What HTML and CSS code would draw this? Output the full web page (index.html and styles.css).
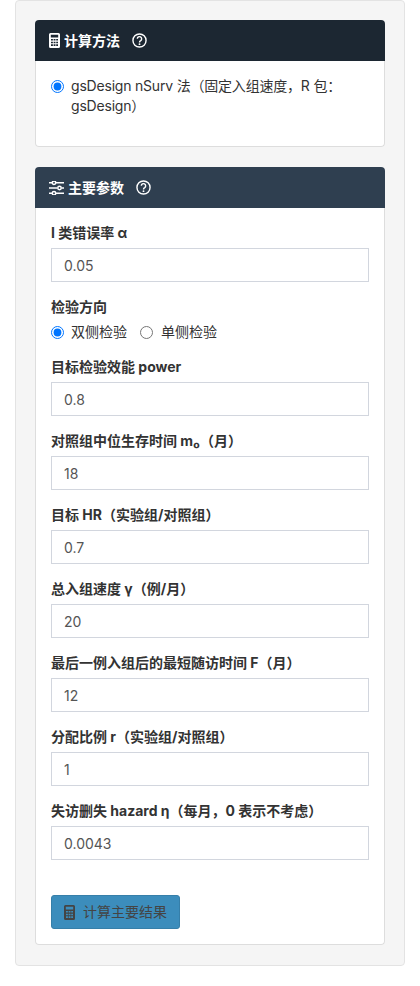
FILE: index.html
```html
<!DOCTYPE html>
<html lang="zh-CN">
<head>
    <meta charset="UTF-8">
    <meta name="viewport" content="width=device-width, initial-scale=1.0">
    <title>计算方法</title>
    <link rel="stylesheet" href="styles.css">
</head>
<body>
    <div class="well">
        <!-- 计算方法 -->
        <div class="box box-dark">
            <div class="box-header">
                <svg class="icon-calc" viewBox="0 0 11 15"><path fill-rule="evenodd" d="M1.500 0h8A1.500 1.500 0 0 1 11 1.500v12A1.500 1.500 0 0 1 9.500 15h-8A1.500 1.500 0 0 1 0 13.500v-12A1.500 1.500 0 0 1 1.500 0zM1.800 1.800v2.700h7.400V1.800zM2 6v1.600h1.900V6zM4.600 6v1.600h1.900V6zM7.200 6v1.600h1.800V6zM2 8.700v1.600h1.900V8.700zM4.600 8.700v1.600h1.900V8.700zM7.200 8.700v1.600h1.800V8.700zM2 11.300v1.800h1.900v-1.800zM4.600 11.300v1.800h1.900v-1.800zM7.200 11.300v1.800h1.800v-1.800z"/></svg>
                <h3>计算方法</h3>
                <svg class="icon-help" viewBox="0 0 16 16"><circle cx="8" cy="8" r="7"/><path d="M5.700 6.200a2.300 2.300 0 1 1 3.600 1.900c-.8.500-1.300 1-1.300 2"/><circle class="dot" cx="8" cy="11.900" r="1"/></svg>
            </div>
            <div class="box-body">
                <label class="radio-line">
                    <input type="radio" name="method" checked>
                    <span>gsDesign nSurv 法（固定入组速度，R 包：gsDesign）</span>
                </label>
            </div>
        </div>

        <!-- 主要参数 -->
        <div class="box box-blue">
            <div class="box-header">
                <svg class="icon-sliders" viewBox="0 0 15 14"><path d="M0 1.800h3M7 1.800h8M0 7h8.500M12.500 7H15M0 12.200h3M7 12.200h8"/><circle cx="5" cy="1.800" r="1.700"/><circle cx="10.500" cy="7" r="1.700"/><circle cx="5" cy="12.200" r="1.700"/></svg>
                <h3>主要参数</h3>
                <svg class="icon-help" viewBox="0 0 16 16"><circle cx="8" cy="8" r="7"/><path d="M5.700 6.200a2.300 2.300 0 1 1 3.600 1.900c-.8.500-1.300 1-1.300 2"/><circle class="dot" cx="8" cy="11.900" r="1"/></svg>
            </div>
            <div class="box-body">
                <div class="form-group">
                    <label>I 类错误率 α</label>
                    <input type="text" value="0.05">
                </div>
                <div class="form-group">
                    <label>检验方向</label>
                    <div class="radio-row">
                        <label><input type="radio" name="side" checked><span>双侧检验</span></label>
                        <label><input type="radio" name="side"><span>单侧检验</span></label>
                    </div>
                </div>
                <div class="form-group">
                    <label>目标检验效能 power</label>
                    <input type="text" value="0.8">
                </div>
                <div class="form-group">
                    <label>对照组中位生存时间 m₀（月）</label>
                    <input type="text" value="18">
                </div>
                <div class="form-group">
                    <label>目标 HR（实验组/对照组）</label>
                    <input type="text" value="0.7">
                </div>
                <div class="form-group">
                    <label>总入组速度 γ（例/月）</label>
                    <input type="text" value="20">
                </div>
                <div class="form-group">
                    <label>最后一例入组后的最短随访时间 F（月）</label>
                    <input type="text" value="12">
                </div>
                <div class="form-group">
                    <label>分配比例 r（实验组/对照组）</label>
                    <input type="text" value="1">
                </div>
                <div class="form-group">
                    <label>失访删失 hazard η（每月，0 表示不考虑）</label>
                    <input type="text" value="0.0043">
                </div>
                <button class="btn" type="button">
                    <svg class="icon-calc" viewBox="0 0 11 15"><path fill-rule="evenodd" d="M1.500 0h8A1.500 1.500 0 0 1 11 1.500v12A1.500 1.500 0 0 1 9.500 15h-8A1.500 1.500 0 0 1 0 13.500v-12A1.500 1.500 0 0 1 1.500 0zM1.800 1.800v2.700h7.400V1.800zM2 6v1.600h1.900V6zM4.600 6v1.600h1.900V6zM7.200 6v1.600h1.800V6zM2 8.700v1.600h1.900V8.700zM4.600 8.700v1.600h1.900V8.700zM7.200 8.700v1.600h1.800V8.700zM2 11.300v1.800h1.900v-1.800zM4.600 11.300v1.800h1.900v-1.800zM7.200 11.300v1.800h1.800v-1.800z"/></svg>
                    计算主要结果
                </button>
            </div>
        </div>
    </div>
</body>
</html>
```

FILE: styles.css
```css
*{
    box-sizing: border-box;
}
body{
    margin: 0;
    padding: 0 15px;
    background: #fff;
    font-family: Inter, "Noto Sans CJK SC", sans-serif;
    font-size: 14px;
    line-height: 20px;
    color: #333;
}
.well{
    height: 966px;
    padding: 19px;
    background: #f5f5f5;
    border: 1px solid #e3e3e3;
    border-radius: 4px;
}
.box{
    background: #fff;
    border-radius: 4px;
    margin-bottom: 20px;
}
.box:last-child{
    margin-bottom: 0;
}
.box-header{
    display: flex;
    align-items: center;
    height: 41px;
    padding: 0 14px;
    color: #fff;
    border-radius: 4px 4px 0 0;
}
.box-dark .box-header{
    background: #1c2732;
}
.box-blue .box-header{
    background: #2f3f50;
}
.box-header h3{
    margin: 0;
    font-size: 14px;
    font-weight: 700;
    line-height: 20px;
}
.box-body{
    padding: 15px;
    background: #fff;
    border: 1px solid #ddd;
    border-top: 0;
    border-radius: 0 0 4px 4px;
}
.icon-calc{
    width: 11px;
    height: 15px;
    fill: #fff;
    flex: none;
}
.box-dark .icon-calc{
    margin-right: 4px;
}
.icon-sliders{
    width: 15px;
    height: 14px;
    margin-right: 4px;
    fill: none;
    stroke: #fff;
    stroke-width: 1.500;
    flex: none;
}
.icon-help{
    width: 15px;
    height: 15px;
    margin-left: 12px;
    fill: none;
    stroke: #fff;
    stroke-width: 1.500;
    flex: none;
}
.icon-help .dot{
    fill: #fff;
    stroke: none;
}
.radio-line{
    display: flex;
    margin-bottom: 15px;
    padding-right: 10px;
    letter-spacing: -0.2px;
}
.radio-line input{
    flex: none;
    width: 13px;
    height: 13px;
    margin: 4px 7px 0 0;
}
.form-group{
    margin-bottom: 15px;
}
.form-group > label{
    display: block;
    margin-bottom: 5px;
    font-weight: 700;
}
.form-group > input{
    display: block;
    width: 100%;
    height: 34px;
    padding: 6px 12px;
    font: inherit;
    color: #555;
    background: #fff;
    border: 1px solid #d2d6de;
    border-radius: 0;
    outline: none;
}
.radio-row{
    display: flex;
    gap: 13px;
}
.radio-row label{
    display: flex;
    align-items: center;
}
.radio-row input{
    width: 13px;
    height: 13px;
    margin: 0 7px 0 0;
}
.radio-row label + label input{
    margin-right: 8px;
}
.btn{
    display: flex;
    align-items: center;
    height: 34px;
    margin-top: 35px;
    padding: 0 12px;
    font: inherit;
    color: #444;
    background: #3c8dbc;
    border: 1px solid #367fa9;
    border-radius: 3px;
}
.btn .icon-calc{
    fill: #444;
    margin-right: 8px;
}
```
